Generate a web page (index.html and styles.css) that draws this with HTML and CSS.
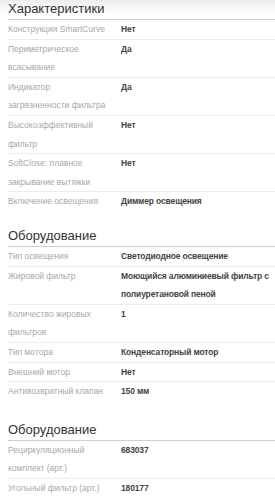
FILE: index.html
```html
<!DOCTYPE html>
<html lang="ru">
<head>
<meta charset="utf-8">
<link rel="stylesheet" href="styles.css">
</head>
<body>
<div class="top-shade"></div>
<div class="page">
  <section class="spec first">
    <h2 class="spec-title">Характеристики</h2>
    <div class="row"><div class="label">Конструкция SmartCurve</div><div class="value">Нет</div></div>
    <div class="row"><div class="label">Периметрическое всасывание</div><div class="value">Да</div></div>
    <div class="row"><div class="label">Индикатор загрязненности фильтра</div><div class="value">Да</div></div>
    <div class="row"><div class="label">Высокоэффективный фильтр</div><div class="value">Нет</div></div>
    <div class="row"><div class="label">SoftClose: плавное закрывание вытяжки</div><div class="value">Нет</div></div>
    <div class="row last"><div class="label">Включение освещения</div><div class="value">Диммер освещения</div></div>
  </section>
  <section class="spec second">
    <h2 class="spec-title">Оборудование</h2>
    <div class="row"><div class="label">Тип освещения</div><div class="value">Светодиодное освещение</div></div>
    <div class="row"><div class="label">Жировой фильтр</div><div class="value">Моющийся алюминиевый фильтр с полиуретановой пеной</div></div>
    <div class="row"><div class="label">Количество жировых фильтров</div><div class="value">1</div></div>
    <div class="row"><div class="label">Тип мотора</div><div class="value">Конденсаторный мотор</div></div>
    <div class="row"><div class="label">Внешний мотор</div><div class="value">Нет</div></div>
    <div class="row last"><div class="label">Антивозвратный клапан</div><div class="value">150 мм</div></div>
  </section>
  <section class="spec third">
    <h2 class="spec-title">Оборудование</h2>
    <div class="row"><div class="label">Рециркуляционный комплект (арт.)</div><div class="value">683037</div></div>
    <div class="row last"><div class="label">Угольный фильтр (арт.)</div><div class="value">180177</div></div>
  </section>
</div>
</body>
</html>
```
FILE: styles.css
```css
html, body {
  margin: 0;
  padding: 0;
  background: #ffffff;
}

body {
  font-family: "Liberation Sans", Arial, Helvetica, sans-serif;
  color: #333333;
  overflow: hidden;
}

.top-shade {
  position: absolute;
  left: 0;
  top: 0;
  width: 100%;
  height: 14px;
  background: linear-gradient(to bottom, rgba(0, 0, 0, 0.07), rgba(0, 0, 0, 0));
  pointer-events: none;
}

.page {
  margin-left: 8px;
}

.spec.first {
  margin-top: 1px;
}

.spec.second {
  margin-top: 17px;
}

.spec.third {
  margin-top: 21px;
}

.spec-title {
  margin: 0;
  font-size: 13px;
  font-weight: normal;
  line-height: 16px;
  padding-bottom: 2px;
  color: #333333;
  border-bottom: 1px solid #cfcfcf;
}

.row {
  display: grid;
  grid-template-columns: 113px 1fr;
  border-bottom: 1px solid #ececec;
  font-size: 8.5px;
  line-height: 18.6px;
}

.row.last {
  border-bottom: none;
}

.label {
  color: #a8a8a8;
  padding-right: 8px;
}

.value {
  color: #444444;
  font-weight: bold;
  letter-spacing: -0.15px;
}
```
